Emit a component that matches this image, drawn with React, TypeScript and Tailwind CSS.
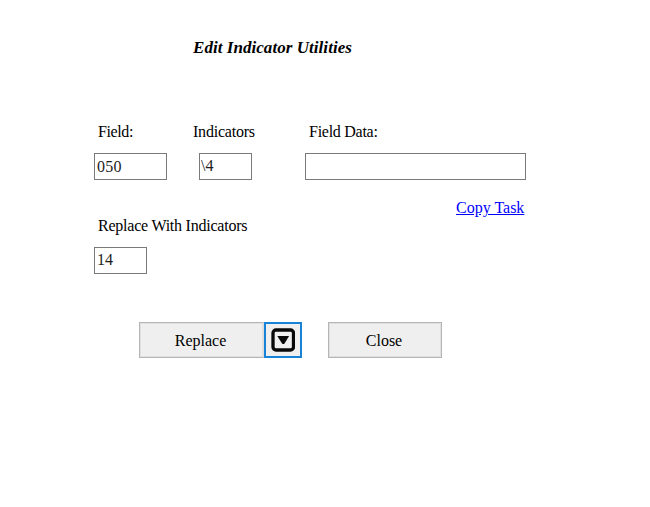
import React from 'react';

const box = "box-border block border border-[#7a7a7a] bg-white text-[#1c1c1c] outline-none";
const button = "border border-[#b5b5b5] bg-[#efefef] pt-px shadow-[inset_0_0_0_1px_#e0e0e0]";

export default function App() {
  return (
    <main className="h-[507px] w-[650px] overflow-hidden bg-white pt-[38px] font-['Liberation_Serif',serif] text-[16px] leading-5 text-black">
      <h1 className="ml-[193px] w-fit whitespace-nowrap text-[17px] font-bold italic leading-5 tracking-[0.05px]">Edit Indicator Utilities</h1>
      <section className="ml-[94px] mt-[64px] flex">
        <div className="w-[105px]">
          <label className="ml-1 block tracking-[-0.4px]">Field:</label>
          <input aria-label="Field" className={`${box} mt-[11px] h-[27px] w-[73px] px-[2px] tracking-[0.3px]`} defaultValue="050" />
        </div>
        <div className="w-[106px]">
          <label className="-ml-1.5 block tracking-[-0.22px]">Indicators</label>
          <input aria-label="Indicators" className={`${box} mt-[11px] h-[27px] w-[53px] px-px pb-0.5`} defaultValue={"\\4"} />
        </div>
        <div className="w-[221px]">
          <label className="ml-1 block tracking-[-0.27px]">Field Data:</label>
          <input aria-label="Field Data" className={`${box} mt-[11px] h-[27px] w-[221px]`} />
          <a href="#" className="ml-[151px] mt-[18px] block w-fit whitespace-nowrap text-[#0000ff] underline">Copy Task</a>
        </div>
      </section>
      <section className="-mt-0.5 ml-[94px]">
        <label className="ml-1 block tracking-[-0.23px]">Replace With Indicators</label>
        <input aria-label="Replacement" className={`${box} mt-[11px] h-[27px] w-[53px] px-[2px] pb-0.5`} defaultValue="14" />
      </section>
      <section className="ml-[139px] mt-[48px] flex h-9">
        <button className={`${button} w-[125px] border-r-[#dcdcdc] pr-0.5`}>Replace</button>
        <button aria-label="Options" className="flex w-[38px] items-center justify-center border-2 border-[#1683d8] bg-[#efefef]">
          <svg width="24" height="24" viewBox="0 0 24 24">
            <rect x="2" y="2" width="20.5" height="20" rx="3" fill="none" stroke="#080808" strokeWidth="3.3" />
            <path d="M6.3 8h11.8l-4.4 7.2q-1.4 1.7-2.8 0z" fill="#080808" />
          </svg>
        </button>
        <button className={`${button} ml-[26px] w-[114px] pr-0.5`}>Close</button>
      </section>
    </main>
  );
}
